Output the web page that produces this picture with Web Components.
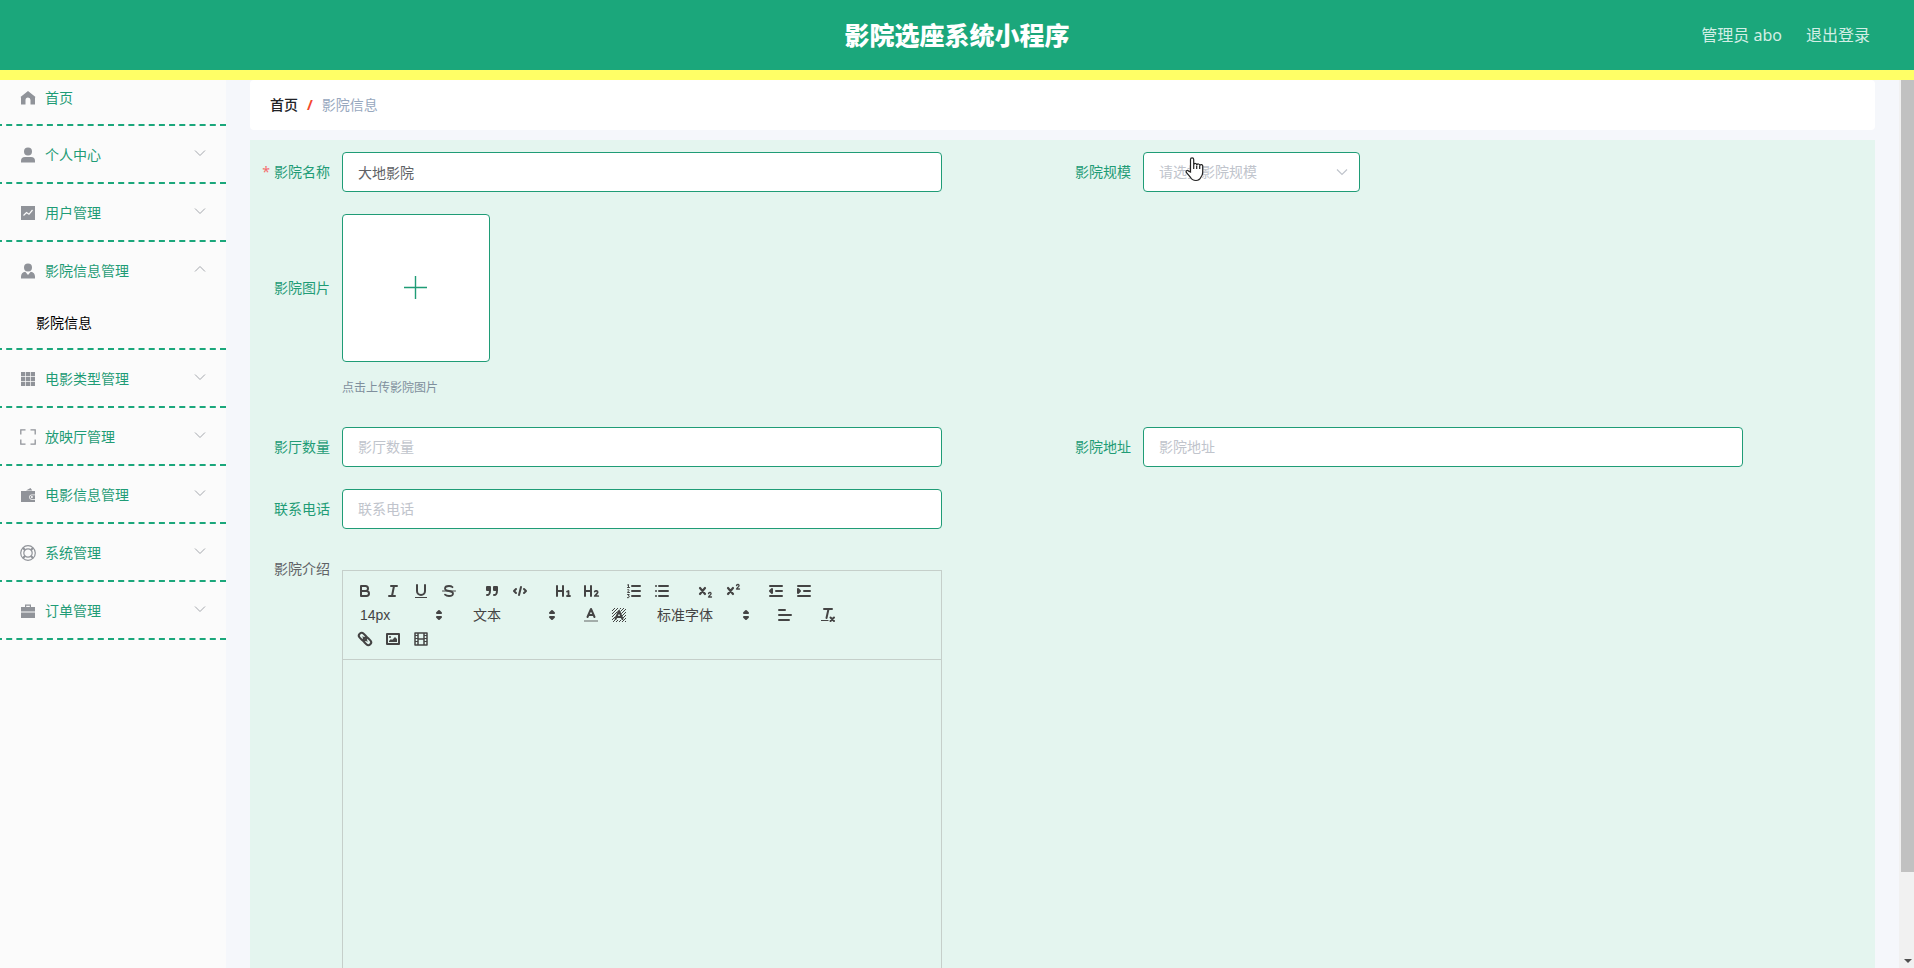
<!DOCTYPE html>
<html lang="zh-CN">
<head>
<meta charset="utf-8">
<meta name="viewport" content="width=device-width, initial-scale=1">
<title>影院选座系统小程序</title>
<style>
html, body { margin: 0; height: 100%; overflow: hidden; }
body { font: 14px/20px "Noto Sans", "Noto Sans CJK SC", sans-serif; color: #606266; --brand: #1ba77b; --accent: #1f9c76; --mint: #e4f5ef; }
</style>
</head>
<body>
<admin-app>
  <app-header slot="header" user="管理员 abo">影院选座系统小程序</app-header>
  <side-menu slot="side">
    <menu-item icon="home" leaf>首页</menu-item>
    <menu-item icon="user">个人中心</menu-item>
    <menu-item icon="chart">用户管理</menu-item>
    <menu-item icon="custom" open>影院信息管理<a slot="sub" href="#cinema">影院信息</a></menu-item>
    <menu-item icon="grid">电影类型管理</menu-item>
    <menu-item icon="full">放映厅管理</menu-item>
    <menu-item icon="wallet">电影信息管理</menu-item>
    <menu-item icon="help">系统管理</menu-item>
    <menu-item icon="case">订单管理</menu-item>
  </side-menu>
  <crumb-bar current="影院信息">首页</crumb-bar>
  <cinema-form>
    <text-field label="影院名称" value="大地影院" required></text-field>
    <select-field label="影院规模" hint="请选择影院规模"></select-field>
    <upload-field label="影院图片" tip="点击上传影院图片"></upload-field>
    <text-field label="影厅数量"></text-field>
    <text-field label="影院地址"></text-field>
    <text-field class="row" label="联系电话"></text-field>
    <rich-editor class="row" label="影院介绍"></rich-editor>
  </cinema-form>
  <scroll-track slot="track"></scroll-track>
</admin-app>

<script>
class Base extends HTMLElement {
  constructor() { super(); this.attachShadow({ mode: 'open' }); }
  connectedCallback() {
    this.shadowRoot.innerHTML = '<style>*{box-sizing:border-box}a{color:inherit;text-decoration:none}button,input,select{font:inherit;margin:0}' + this.css() + '</style>' + this.html();
  }
  at(name) { return this.getAttribute(name) || ''; }
}

customElements.define('admin-app', class extends Base {
  css() { return `
    :host{display:grid;grid-template:auto 1fr / 226px 1fr 15px;height:100vh;overflow:hidden}
    slot[name=header]{display:block;grid-column:1 / -1}
    aside,main{min-height:0;overflow:hidden}
    aside{background:#fbfbfb}
    main{background:#f5f7fb;padding:0 24px}`; }
  html() { return '<slot name="header"></slot><aside><slot name="side"></slot></aside><main><slot></slot></main><slot name="track"></slot>'; }
});

customElements.define('app-header', class extends Base {
  css() { return `
    :host{display:block;background:var(--brand);border-bottom:10px solid #ffff66;color:#fff}
    header{display:grid;grid-template-columns:1fr auto 1fr;align-items:center;height:70px;padding:0 44px}
    h1{grid-column:2;margin:0;font-size:25px;line-height:36px;font-weight:900}
    nav{display:flex;justify-content:flex-end;gap:24px;font-size:16px;line-height:24px;color:#d3eee5}`; }
  html() { return `<header><h1><slot></slot></h1><nav><span>${this.at('user')}</span><a href="#logout">退出登录</a></nav></header>`; }
});

customElements.define('side-menu', class extends Base {
  css() { return ':host{display:block;margin-left:-4px}'; }
  html() { return '<nav><slot></slot></nav>'; }
});

const menuIcons = {
  home: '<path d="M1.5 8 9 2l7.500 6L16 8.500V15.500h-4.500V11a2.500 2.500 0 0 0-5 0v4.500H2V8.500z"/>',
  user: '<circle cx="9" cy="5.500" r="4"/><path d="M2 16.500V15a4 4 0 0 1 4-4h6a4 4 0 0 1 4 4v1.500z"/>',
  chart: '<path d="M2 2h14v14H2z"/><path d="m4.500 11.500 3-3 2.500 1.800 3.500-4.300" fill="none" stroke="#fbfbfb" stroke-width="1.200"/>',
  custom: '<circle cx="9" cy="5.500" r="4"/><path d="M2 16.500v-2a5 5 0 0 1 4.300-4.800L9 13l2.700-3.300A5 5 0 0 1 16 14.500v2z"/>',
  grid: '<path d="M2 2h4.200v4.200H2zM6.900 2h4.200v4.200H6.900zM11.800 2H16v4.200h-4.200zM2 6.900h4.200v4.200H2zM6.900 6.900h4.200v4.200H6.900zM11.800 6.900H16v4.200h-4.200zM2 11.800h4.200V16H2zM6.900 11.800h4.200V16H6.900zM11.800 11.800H16V16h-4.200z"/>',
  full: '<path d="M6.500 1.800H1.800v4.700M11.500 1.800h4.700v4.700M6.500 16.200H1.800v-4.700M11.500 16.200h4.700v-4.700" fill="none" stroke="#909399" stroke-width="1.300"/>',
  wallet: '<path d="M7 4.400 11.500 2l1.800 2.400zM2 5h14v3.500h-3.200a2.600 2.600 0 0 0 0 5.200H16V16H2z"/><path d="M12.800 9.200H16V13h-3.200a1.900 1.900 0 0 1 0-3.800z"/><circle cx="12.900" cy="11.100" r="1" fill="#fbfbfb"/>',
  help: '<g fill="none" stroke="#909399" stroke-width="1.200"><circle cx="9" cy="9" r="7.300"/><circle cx="9" cy="9" r="4.200"/><path d="M3.800 3.800 6 6M14.200 3.800 12 6M3.800 14.200 6 12M14.200 14.200 12 12" stroke-width="2"/></g>',
  case: '<path d="M6 2.500h6V5h4v4.500H2V5h4zm1.200 1.200V5h3.600V3.700zM2 10.500h14v5.500H2z" fill-rule="evenodd"/>'
};
customElements.define('menu-item', class extends Base {
  css() { return `
    :host{display:block;border-bottom:2px dashed var(--brand)}
    button{display:flex;align-items:center;gap:8px;width:100%;height:56px;padding:2px 20px 0 23px;border:0;background:none;color:var(--accent);text-align:left}
    :host([leaf]) button{height:44px;padding-top:0;padding-bottom:8px}
    .icon{width:18px;height:18px;fill:#909399}
    span{flex:1}
    .arrow{width:12px;height:16px;padding-bottom:4px;fill:none;stroke:#a4a7ad}
    :host([leaf]) .arrow{display:none}
    ::slotted(a){display:block;padding-left:40px;line-height:50px;color:#000;text-decoration:none}`; }
  html() {
    const open = this.hasAttribute('open');
    return `<button type="button" aria-expanded="${open}"><svg class="icon" viewBox="0 0 18 18">${menuIcons[this.at('icon')]}</svg><span><slot></slot></span><svg class="arrow" viewBox="0 0 12 12"><path d="${open ? 'm1 8.500 5-5 5 5' : 'm1 3.500 5 5 5-5'}"/></svg></button><slot name="sub"></slot>`;
  }
});

customElements.define('crumb-bar', class extends Base {
  css() { return `
    :host{display:block;background:#fff;border-radius:4px;margin-bottom:10px}
    nav{display:flex;gap:9px;padding:15px 20px;line-height:20px;color:#97a8be}
    a{font-weight:500;color:#202226}
    i{font-style:normal;font-weight:700;color:#f5482d}`; }
  html() { return `<nav aria-label="路径"><a href="#home"><slot></slot></a><i>/</i><span>${this.at('current')}</span></nav>`; }
});

customElements.define('cinema-form', class extends Base {
  css() { return `
    :host{display:block;background:var(--mint)}
    form{display:grid;grid-template-columns:1fr 1fr;row-gap:22px;padding:12px 23px 30px 0}
    ::slotted(.row),::slotted(upload-field){grid-column:1 / -1}`; }
  html() { return '<form><slot></slot></form>'; }
});

const fieldCss = `
  :host{display:flex;align-items:flex-start;color:var(--accent)}
  label{flex:none;width:92px;padding-right:12px;line-height:40px;text-align:right}
  b{margin-right:4px;color:#f56c6c;font-weight:400}
  input,select{height:40px;border:1px solid var(--accent);border-radius:4px;background:#fff;padding:0 15px;color:#606266;outline:0}
  input:placeholder-shown{padding-bottom:2px}
  ::placeholder{color:#c0c4cc;opacity:1}`;

customElements.define('text-field', class extends Base {
  css() { return fieldCss + 'input{width:600px;min-width:0}'; }
  html() {
    const l = this.at('label'), star = this.hasAttribute('required') ? '<b>*</b>' : '';
    return `<label for="f">${star}${l}</label><input id="f" type="text" value="${this.at('value')}" placeholder="${l}">`;
  }
});

customElements.define('select-field', class extends Base {
  css() { return fieldCss + `
    div{position:relative;display:flex}
    select{width:217px;appearance:none;color:#c0c4cc}
    .arrow{position:absolute;right:12px;top:14px;width:12px;height:12px;fill:none;stroke:#c0c4cc;pointer-events:none}
    .hand{position:absolute;left:42px;top:5px;width:19px;height:25px;pointer-events:none}`; }
  html() { return `<label for="f">${this.at('label')}</label><div><select id="f"><option>${this.at('hint')}</option></select>
    <svg class="arrow" viewBox="0 0 12 12"><path d="m1 3.500 5 5 5-5" stroke-width="1.200"/></svg>
    <svg class="hand" viewBox="0 0 19 25"><path d="M5.500 15V2.500a1.600 1.600 0 0 1 3.200 0v5.300a1.500 1.500 0 0 1 3 .4 1.500 1.500 0 0 1 3 .6 1.500 1.500 0 0 1 3 .7v6c0 2-.7 3.200-1.700 4.500-.8 1.700-2 3.500-5 3.500-3.500 0-4.700-1.500-5.700-3.500L1.300 15.500c-.8-1.500.9-2.600 2-1.600z" fill="#fff" stroke="#222" stroke-width="1.200"/><path d="M8.700 7.500V12M11.700 8.500V12M14.700 9V12" stroke="#222" stroke-width="1.200" fill="none"/></svg></div>`; }
});

customElements.define('upload-field', class extends Base {
  css() { return fieldCss + `
    label{line-height:148px}
    button{display:grid;place-items:center;width:148px;height:148px;padding:0;border:1px solid var(--accent);border-radius:4px;background:#fff}
    svg{width:24px;height:24px;stroke:var(--accent);stroke-width:1.400}
    p{margin:16px 0 7px;font-size:12px;line-height:20px;color:#7f8f9d}`; }
  html() { return `<label for="f">${this.at('label')}</label><div><button id="f" type="button" aria-label="上传"><svg viewBox="0 0 24 24"><path d="M11.500 0v23M0 11.500h23"/></svg></button><p>${this.at('tip')}</p></div>`; }
});

/* Toolbar glyphs on an 18 x 18 grid: s = outline, t = thin outline, f = filled. */
const tools = {
  bold: '<path class="s" d="M5 4h4.500a2.500 2.500 0 0 1 0 5H5zM5 9h5.500a2.500 2.500 0 0 1 0 5H5z"/>',
  italic: '<path class="s" d="M7 4h6M5 14h6M8 14l2-10"/>',
  underline: '<path class="s" d="M5 3v6a4 4 0 0 0 8 0V3"/><rect class="f" x="3" y="15" width="12" height="1"/>',
  strike: '<path class="s t" d="M15.500 9H2.500"/><path class="s" d="M12.500 5.200C11.500 4.300 10.300 4 9 4 6.300 4 5 5.200 5 6.500S6.200 8.600 9 9s4 1.200 4 2.500S11.700 14 9 14c-1.700 0-3-.4-4-1.300" style="stroke-width:1.800"/>',
  quote: '<path class="f s" d="M4 5h3v3H4zM11 5h3v3h-3z"/><path class="s" d="M7 8c0 4-.6 5-3 5M14 8c0 4-.6 5-3 5"/>',
  code: '<path class="s" d="M5 7 3 9l2 2M13 7l2 2-2 2M10 5 8 13"/>',
  h1: '<path class="s" d="M3 4v10M9 4v10M3 9h6"/><path class="s" d="M13 9.500 14.500 9v5M13 14h3" style="stroke-width:1.800"/>',
  h2: '<path class="s" d="M3 4v10M9 4v10M3 9h6"/><path class="s" d="M12.700 9.500c.8-1 3.200-.8 3 .8-.2 1.200-1.700 2-3 3.700h3.600" style="stroke-width:1.700"/>',
  ol: '<path class="s" d="M7 4h8M7 9h8M7 14h8"/><path class="s t" d="M2.500 5.500h2M3.500 5.500v-3l-1 .5M2.500 7.700c1-.8 2 .2 1.200 1.100L2.500 10.500h2M2.500 12.500h1.700L3.400 14c1.500 0 1.500 2-1 1.700"/>',
  ul: '<path class="s" d="M6 4h9M6 9h9M6 14h9M3 4h.01M3 9h.01M3 14h.01"/>',
  sub: '<path class="s" d="m4 6 5 6M9 6l-5 6" style="stroke-width:2.200"/><path class="s t" d="M12.500 11.500c.3-1.500 3-1.300 2.500.3-.2.900-1.500 1.500-2.500 3.200h3" style="stroke-width:1.300"/>',
  sup: '<path class="s" d="m4 6 5 6M9 6l-5 6" style="stroke-width:2.200"/><path class="s t" d="M12.500 3.500c.3-1.500 3-1.300 2.500.3-.2.900-1.500 1.500-2.500 3.200h3" style="stroke-width:1.300"/>',
  outdent: '<path class="s" d="M3 14h12M3 4h12M9 9h6"/><path class="f s" d="M5 7v4L3 9z"/>',
  indent: '<path class="s" d="M3 14h12M3 4h12M9 9h6"/><path class="f s" d="M3 7v4l2-2z"/>',
  color: '<path d="M2 15h14" stroke="#444" stroke-width="2" opacity=".4"/><path class="s" d="m5.500 11 3.500-8 3.500 8M6.800 9h4.400"/>',
  background: '<defs><pattern id="h" width="3" height="3" patternUnits="userSpaceOnUse"><path d="M0 0h1v1H0zM2 1h1v1H2zM1 2h1v1H1z" fill="#444"/></pattern></defs><path d="M2 2h14v14H2z" fill="url(#h)"/><path d="M9 2 4 14h10z" fill="#e4f5ef"/><path class="s" d="M5.500 13 9 5l3.500 8M6.800 11h4.400"/>',
  align: '<path class="s" d="M3 9h12M3 14h10M3 4h6"/>',
  clean: '<path class="s" d="M5 3h8M7.500 12l2-9M11.500 11.500l3.500 3.500M15 11.500 11.500 15"/><rect class="f" x="2" y="14" width="7.500" height="1"/>',
  link: '<g transform="rotate(45 9 9)"><rect class="s" x="1.500" y="6.200" width="8.500" height="5.600" rx="2.800"/><rect class="s" x="8" y="6.200" width="8.500" height="5.600" rx="2.800"/><path class="s t" d="M6 9h6"/></g>',
  image: '<rect class="s" x="3" y="4" width="12" height="10"/><circle class="f" cx="6" cy="7" r="1"/><path class="f" d="M5 12v-1l2-2 1 1 3-3 2 2v3z"/>',
  video: '<path class="s" d="M3 3h12v12H3zM6 3v12M12 3v12M6 9h6" style="stroke-width:1.500"/><path class="f" d="M3 5h3v1H3zM3 8h3v1H3zM3 11h3v1H3zM12 5h3v1h-3zM12 8h3v1h-3zM12 11h3v1h-3z"/>'
};
const layout = [
  ['bold', 'italic', 'underline', 'strike'], ['quote', 'code'], ['h1', 'h2'], ['ol', 'ul'], ['sub', 'sup'], ['outdent', 'indent'],
  '14px', '文本', ['color', 'background'], '标准字体', ['align'], ['clean'], ['link', 'image', 'video']
];
customElements.define('rich-editor', class extends Base {
  css() { return fieldCss + `
    label{line-height:36px;color:#606266}
    .box{width:600px;margin-top:19px;border:1px solid #c5cfca}
    .bar{display:flex;flex-wrap:wrap;padding:8px;border-bottom:1px solid #c5cfca}
    .group{display:flex;position:relative;height:24px;margin-right:15px}
    .group button{width:28px;height:24px;padding:3px 5px;border:0;background:none}
    svg{display:block;width:18px;height:18px}
    .s{fill:none;stroke:#444;stroke-width:2;stroke-linecap:round;stroke-linejoin:round}
    .t{stroke-width:1}
    .f{fill:#444}
    select{appearance:none;width:98px;height:24px;padding:0 9px;border:0;border-radius:0;background:none;color:#444;font-family:"Liberation Sans","Noto Sans CJK SC",sans-serif}
    .wide select{width:108px}
    .group > svg{position:absolute;right:1px;top:3px;pointer-events:none}
    .area{min-height:400px;padding:12px 15px;outline:0}`; }
  html() {
    const groups = layout.map(g => Array.isArray(g)
      ? `<div class="group">${g.map(n => `<button type="button" aria-label="${n}"><svg viewBox="0 0 18 18">${tools[n]}</svg></button>`).join('')}</div>`
      : `<div class="group${g === '标准字体' ? ' wide' : ''}"><select aria-label="${g}"><option>${g}</option></select><svg viewBox="0 0 18 18"><path class="s" style="fill:#444" d="m7 11 2 2 2-2zM7 7l2-2 2 2z"/></svg></div>`).join('');
    return `<label id="l">${this.at('label')}</label><div class="box"><div class="bar" role="toolbar">${groups}</div><div class="area" contenteditable="true" role="textbox" aria-labelledby="l"></div></div>`;
  }
});

customElements.define('scroll-track', class extends Base {
  css() { return `
    :host{display:flex;flex-direction:column;justify-content:space-between;align-items:center;background:#f1f1f1;padding:0 0 5px 2px}
    div{width:100%;height:calc(100% - 91px);background:#c1c1c1}
    svg{width:8px;height:4px;fill:#505050}`; }
  html() { return '<div></div><svg viewBox="0 0 8 4"><path d="M0 0h8L4 4z"/></svg>'; }
});
</script>
</body>
</html>
